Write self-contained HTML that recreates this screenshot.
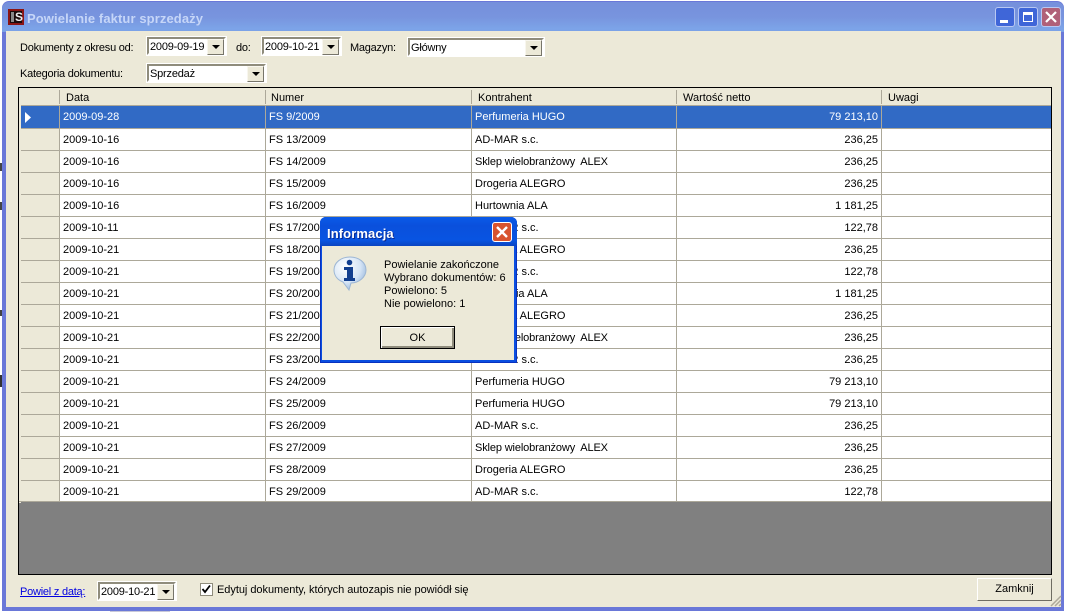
<!DOCTYPE html>
<html><head><meta charset="utf-8"><style>
html,body{margin:0;padding:0;background:#fff}
body{width:1066px;height:612px;overflow:hidden;position:relative;font:11px/14px "Liberation Sans",sans-serif;color:#000}
div,span,a,svg{position:absolute;white-space:nowrap}
.win{left:2px;top:1px;width:1062px;height:610px;background:#6a78d8;border-radius:7px 7px 0 0}
.title{left:0;top:1px;width:1062px;height:30px;border-radius:7px 7px 0 0;background:linear-gradient(#7590dc 0,#7894de 50%,#7ca4e8 90%,#7aa0e6 100%)}
.client{left:4px;top:30px;width:1055px;height:576px;background:#ece9d8}
.t{font-weight:bold;font-size:13px;color:#c6d6f8;left:27px;top:11px;letter-spacing:.1px;line-height:16px;font-family:"Liberation Sans",sans-serif}
.lb{height:14px;letter-spacing:-.24px}
.bt{width:20px;height:20px;top:7px;border:1px solid #b9c8f2;border-radius:3px;box-sizing:border-box}
.field{background:#fff;box-sizing:border-box;border:2px solid;border-color:#8f8c7c #fff #fff #8f8c7c;outline:1px solid #fff;height:18px}
.field b{font-weight:normal;position:absolute;left:1px;top:1px;line-height:14px;letter-spacing:-.2px}
.arr{position:absolute;top:0;right:0;width:15px;height:14px;background:#ece9d8;border:1px solid;border-color:#f8f6ee #77756a #77756a #f8f6ee}
.arr:after{content:"";position:absolute;left:4px;top:5px;border:4px solid transparent;border-top:4px solid #000;border-bottom:0}
.grid{left:18px;top:87px;width:1034px;height:488px;box-sizing:border-box;border:1px solid #000;background:#808080;overflow:hidden}
.hd{left:0;top:0;width:1032px;height:18px;background:#ece9d8}
.hd span{top:3px}
.hd i{position:absolute;top:2px;width:1px;height:14px;background:#aca899}
.r{left:0;width:1032px;height:22px;background:#fff;border-top:1px solid #aca899;box-sizing:border-box}
.r:before{content:"";position:absolute;left:2px;top:0;width:38px;height:21px;background:#ece9d8}
.r:after{content:"";position:absolute;left:0;top:-1px;width:2px;height:23px;background:#ece9d8}
.r span{top:4px}
.c1{left:44px}.c2{left:250px}.c3{left:456px}
.c3.w{letter-spacing:-.14px}
.r .c4{right:173px;text-align:right}
.r .v{position:absolute;top:0;width:1px;height:21px;background:#aca899}
.r.s{background:#316ac5;color:#fff;height:23px}
.s:before{background:#316ac5;height:22px}
.r.s .v{height:22px}
.dlg{left:320px;top:217px;width:197px;height:146px;background:#0a4ee0;border-radius:6px 6px 0 0;box-shadow:inset 0 0 0 1px #0831c0}
.dt{left:0;top:0;width:197px;height:29px;border-radius:6px 6px 0 0;background:linear-gradient(#0a5ae8,#0a50dc 30%,#0854e2 80%,#0a44c0)}
.db{left:2px;top:29px;width:192px;height:114px;background:#ece9d8}
</style></head><body>
<div style="left:0;top:0;width:2px;height:612px;background:#fff"></div>
<div style="left:0;top:163px;width:2px;height:8px;background:#444"></div>
<div style="left:0;top:202px;width:2px;height:8px;background:#444"></div>
<div style="left:0;top:310px;width:2px;height:6px;background:#444"></div>
<div style="left:0;top:375px;width:2px;height:12px;background:#333"></div>
<div style="left:110px;top:610px;width:60px;height:2px;background:#c8c8d8"></div>
<div class="win">
<div class="title"></div>
<div class="client"></div>
</div>
<div style="left:8px;top:9px;width:16px;height:16px;box-sizing:border-box;background:#1a0a0a;border:2px solid #8a1414"></div>
<div style="left:11px;top:12px;width:3px;height:10px;background:#888"></div>
<div style="left:15px;top:11px;width:8px;height:12px;color:#eee;font:bold 12px/13px 'Liberation Sans',sans-serif;text-align:center">S</div>
<div class="t" style="left:27px;top:11px">Powielanie faktur sprzedaży</div>

<div class="bt" style="left:995px;background:#3f66d8"><div style="left:4px;top:12px;width:8px;height:3px;background:#fff"></div></div>
<div class="bt" style="left:1018px;background:#3f66d8"><div style="left:4px;top:4px;width:10px;height:10px;box-sizing:border-box;border:1px solid #fff;border-top:3px solid #fff"></div></div>
<div class="bt" style="left:1041px;background:#b06078">
<svg style="left:2px;top:2px" width="14" height="14" viewBox="0 0 14 14"><path d="M2 2L12 12M12 2L2 12" stroke="#fff" stroke-width="2.2" fill="none"/></svg></div>

<div class="lb" style="left:20px;top:41px">Dokumenty z okresu od:</div>
<div class="field" style="left:147px;top:37px;width:79px"><b>2009-09-19</b><span class="arr"></span></div>
<div class="lb" style="left:236px;top:41px">do:</div>
<div class="field" style="left:262px;top:37px;width:79px"><b>2009-10-21</b><span class="arr"></span></div>
<div class="lb" style="left:350px;top:41px">Magazyn:</div>
<div class="field" style="left:408px;top:38px;width:136px"><b>Główny</b><span class="arr"></span></div>
<div class="lb" style="left:20px;top:67px">Kategoria dokumentu:</div>
<div class="field" style="left:147px;top:64px;width:119px"><b>Sprzedaż</b><span class="arr"></span></div>

<div class="grid">
<div class="hd"><i style="left:40px"></i><i style="left:246px"></i><i style="left:452px"></i><i style="left:657px"></i><i style="left:862px"></i>
<span style="left:47px">Data</span><span style="left:252px">Numer</span><span style="left:459px">Kontrahent</span><span style="left:664px">Wartość netto</span><span style="left:869px">Uwagi</span></div>

<div class="r s" style="top:17px"><span class="v" style="left:40px"></span><span class="v" style="left:246px"></span><span class="v" style="left:452px"></span><span class="v" style="left:657px"></span><span class="v" style="left:862px"></span>
<svg style="left:5px;top:6px" width="8" height="11"><path d="M1 0L7 5.5L1 11Z" fill="#fff"/></svg>
<span class="c1">2009-09-28</span><span class="c2">FS 9/2009</span><span class="c3">Perfumeria HUGO</span><span class="c4">79 213,10</span></div>

<div class="r" style="top:40px"><span class="v" style="left:40px"></span><span class="v" style="left:246px"></span><span class="v" style="left:452px"></span><span class="v" style="left:657px"></span><span class="v" style="left:862px"></span><span class="c1">2009-10-16</span><span class="c2">FS 13/2009</span><span class="c3">AD-MAR s.c.</span><span class="c4">236,25</span></div>
<div class="r" style="top:62px"><span class="v" style="left:40px"></span><span class="v" style="left:246px"></span><span class="v" style="left:452px"></span><span class="v" style="left:657px"></span><span class="v" style="left:862px"></span><span class="c1">2009-10-16</span><span class="c2">FS 14/2009</span><span class="c3 w">Sklep wielobranżowy&nbsp; ALEX</span><span class="c4">236,25</span></div>
<div class="r" style="top:84px"><span class="v" style="left:40px"></span><span class="v" style="left:246px"></span><span class="v" style="left:452px"></span><span class="v" style="left:657px"></span><span class="v" style="left:862px"></span><span class="c1">2009-10-16</span><span class="c2">FS 15/2009</span><span class="c3">Drogeria ALEGRO</span><span class="c4">236,25</span></div>
<div class="r" style="top:106px"><span class="v" style="left:40px"></span><span class="v" style="left:246px"></span><span class="v" style="left:452px"></span><span class="v" style="left:657px"></span><span class="v" style="left:862px"></span><span class="c1">2009-10-16</span><span class="c2">FS 16/2009</span><span class="c3">Hurtownia ALA</span><span class="c4">1 181,25</span></div>
<div class="r" style="top:128px"><span class="v" style="left:40px"></span><span class="v" style="left:246px"></span><span class="v" style="left:452px"></span><span class="v" style="left:657px"></span><span class="v" style="left:862px"></span><span class="c1">2009-10-11</span><span class="c2">FS 17/2009</span><span class="c3">AD-MAR s.c.</span><span class="c4">122,78</span></div>
<div class="r" style="top:150px"><span class="v" style="left:40px"></span><span class="v" style="left:246px"></span><span class="v" style="left:452px"></span><span class="v" style="left:657px"></span><span class="v" style="left:862px"></span><span class="c1">2009-10-21</span><span class="c2">FS 18/2009</span><span class="c3">Drogeria ALEGRO</span><span class="c4">236,25</span></div>
<div class="r" style="top:172px"><span class="v" style="left:40px"></span><span class="v" style="left:246px"></span><span class="v" style="left:452px"></span><span class="v" style="left:657px"></span><span class="v" style="left:862px"></span><span class="c1">2009-10-21</span><span class="c2">FS 19/2009</span><span class="c3">AD-MAR s.c.</span><span class="c4">122,78</span></div>
<div class="r" style="top:194px"><span class="v" style="left:40px"></span><span class="v" style="left:246px"></span><span class="v" style="left:452px"></span><span class="v" style="left:657px"></span><span class="v" style="left:862px"></span><span class="c1">2009-10-21</span><span class="c2">FS 20/2009</span><span class="c3">Hurtownia ALA</span><span class="c4">1 181,25</span></div>
<div class="r" style="top:216px"><span class="v" style="left:40px"></span><span class="v" style="left:246px"></span><span class="v" style="left:452px"></span><span class="v" style="left:657px"></span><span class="v" style="left:862px"></span><span class="c1">2009-10-21</span><span class="c2">FS 21/2009</span><span class="c3">Drogeria ALEGRO</span><span class="c4">236,25</span></div>
<div class="r" style="top:238px"><span class="v" style="left:40px"></span><span class="v" style="left:246px"></span><span class="v" style="left:452px"></span><span class="v" style="left:657px"></span><span class="v" style="left:862px"></span><span class="c1">2009-10-21</span><span class="c2">FS 22/2009</span><span class="c3 w">Sklep wielobranżowy&nbsp; ALEX</span><span class="c4">236,25</span></div>
<div class="r" style="top:260px"><span class="v" style="left:40px"></span><span class="v" style="left:246px"></span><span class="v" style="left:452px"></span><span class="v" style="left:657px"></span><span class="v" style="left:862px"></span><span class="c1">2009-10-21</span><span class="c2">FS 23/2009</span><span class="c3">AD-MAR s.c.</span><span class="c4">236,25</span></div>
<div class="r" style="top:282px"><span class="v" style="left:40px"></span><span class="v" style="left:246px"></span><span class="v" style="left:452px"></span><span class="v" style="left:657px"></span><span class="v" style="left:862px"></span><span class="c1">2009-10-21</span><span class="c2">FS 24/2009</span><span class="c3">Perfumeria HUGO</span><span class="c4">79 213,10</span></div>
<div class="r" style="top:304px"><span class="v" style="left:40px"></span><span class="v" style="left:246px"></span><span class="v" style="left:452px"></span><span class="v" style="left:657px"></span><span class="v" style="left:862px"></span><span class="c1">2009-10-21</span><span class="c2">FS 25/2009</span><span class="c3">Perfumeria HUGO</span><span class="c4">79 213,10</span></div>
<div class="r" style="top:326px"><span class="v" style="left:40px"></span><span class="v" style="left:246px"></span><span class="v" style="left:452px"></span><span class="v" style="left:657px"></span><span class="v" style="left:862px"></span><span class="c1">2009-10-21</span><span class="c2">FS 26/2009</span><span class="c3">AD-MAR s.c.</span><span class="c4">236,25</span></div>
<div class="r" style="top:348px"><span class="v" style="left:40px"></span><span class="v" style="left:246px"></span><span class="v" style="left:452px"></span><span class="v" style="left:657px"></span><span class="v" style="left:862px"></span><span class="c1">2009-10-21</span><span class="c2">FS 27/2009</span><span class="c3 w">Sklep wielobranżowy&nbsp; ALEX</span><span class="c4">236,25</span></div>
<div class="r" style="top:370px"><span class="v" style="left:40px"></span><span class="v" style="left:246px"></span><span class="v" style="left:452px"></span><span class="v" style="left:657px"></span><span class="v" style="left:862px"></span><span class="c1">2009-10-21</span><span class="c2">FS 28/2009</span><span class="c3">Drogeria ALEGRO</span><span class="c4">236,25</span></div>
<div class="r" style="top:392px"><span class="v" style="left:40px"></span><span class="v" style="left:246px"></span><span class="v" style="left:452px"></span><span class="v" style="left:657px"></span><span class="v" style="left:862px"></span><span class="c1">2009-10-21</span><span class="c2">FS 29/2009</span><span class="c3">AD-MAR s.c.</span><span class="c4">122,78</span></div>
<div style="left:0;top:413px;width:1032px;height:1px;background:#aca899"></div>
</div>

<a style="left:20px;top:585px;color:#0000e0;text-decoration:underline;height:14px;letter-spacing:-.23px">Powiel z datą:</a>
<div class="field" style="left:98px;top:582px;width:78px"><b>2009-10-21</b><span class="arr"></span></div>
<div style="left:200px;top:583px;width:11px;height:11px;background:#fff;border:1px solid #8f8c7c"></div>
<svg style="left:201px;top:584px" width="11" height="11"><path d="M1.500 5L4 8L9 1.500" stroke="#000" stroke-width="1.800" fill="none"/></svg>
<div style="left:217px;top:583px;height:14px;letter-spacing:-.04px">Edytuj dokumenty, których autozapis nie powiódł się</div>

<div style="left:977px;top:578px;width:75px;height:23px;box-sizing:border-box;background:#ece9d8;border:1px solid;border-color:#fff #6f6d62 #6f6d62 #fff;text-align:center;line-height:21px">Zamknij</div>
<svg style="left:1050px;top:594px" width="12" height="13"><path d="M1 12L11 2M5 12L11 6M9 12L11 10" stroke="#aca899" stroke-width="1.500"/></svg>

<div class="dlg">
<div class="dt"></div>
<div class="t" style="left:7px;top:9px;color:#fff;font-size:13px;letter-spacing:.1px;text-shadow:1px 1px 0 #0a2a90">Informacja</div>
<div style="left:172px;top:5px;width:20px;height:20px;box-sizing:border-box;background:#d8532e;border:1px solid #fff;border-radius:3px"></div>
<svg style="left:173px;top:6px" width="18" height="18"><path d="M4 4L14 14M14 4L4 14" stroke="#fff" stroke-width="2.400"/></svg>
<div class="db"></div>
<svg style="left:13px;top:39px" width="34" height="36" viewBox="0 0 34 36">
<defs><radialGradient id="g" cx=".35" cy=".3" r=".8"><stop offset="0" stop-color="#fff"/><stop offset=".6" stop-color="#d5e4f5"/><stop offset="1" stop-color="#8eb0d8"/></radialGradient></defs>
<path d="M17 1C8 1 1 6.500 1 14C1 20 5 24 10 26L16 34L18 27C26 27 33 21 33 14C33 6.500 26 1 17 1Z" fill="url(#g)" stroke="#9db6d4"/>
<circle cx="16.500" cy="6.500" r="2.800" fill="#123f8f"/>
<path d="M11 11H20V22H22V25H11V22H14V14H11Z" fill="#123f8f"/>
</svg>
<div style="left:64px;top:42px;line-height:13px">Powielanie zakończone<br>Wybrano dokumentów: 6<br>Powielono: 5<br>Nie powielono: 1</div>
<div style="left:60px;top:109px;width:75px;height:23px;box-sizing:border-box;background:#ece9d8;border:1px solid #000;box-shadow:inset 1px 1px 0 #fff,inset -2px -2px 0 #8f8c7c;text-align:center;line-height:22px">OK</div>
</div>
</body></html>
